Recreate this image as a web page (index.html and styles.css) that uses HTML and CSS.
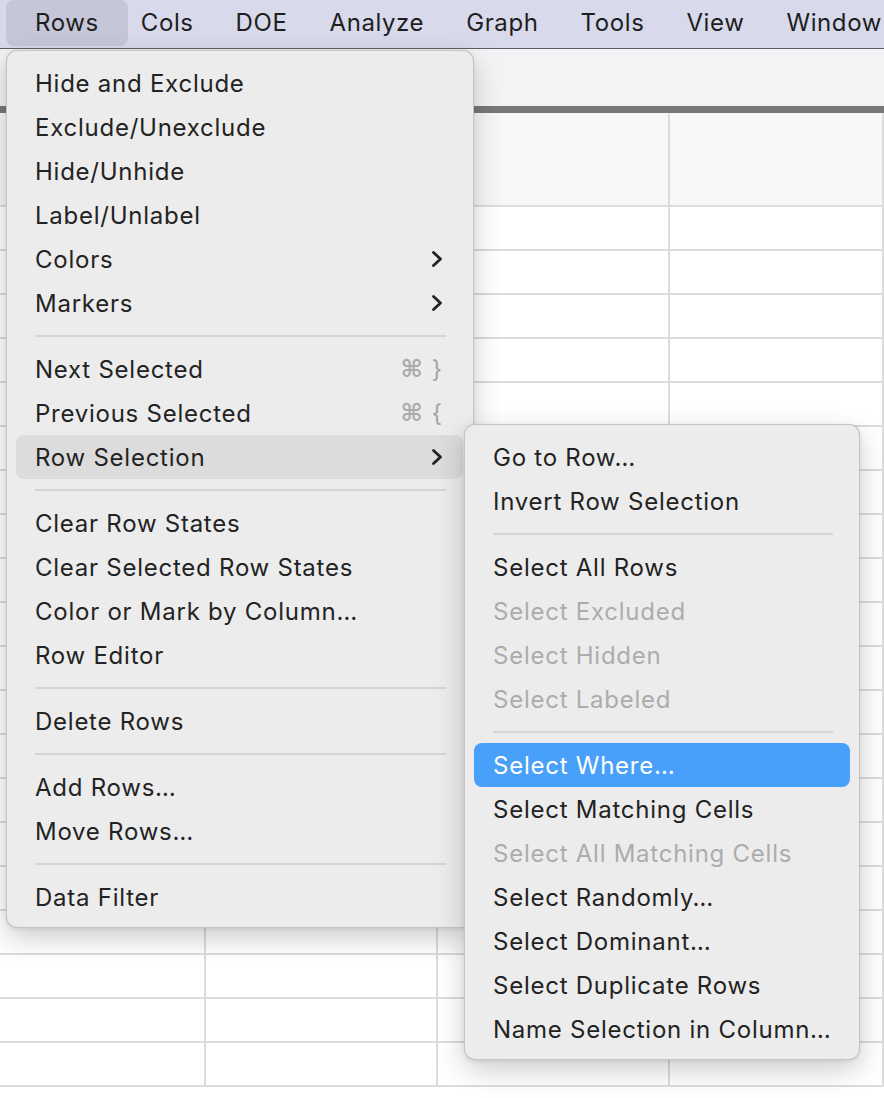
FILE: index.html
```html
<!DOCTYPE html>
<html lang="en">
<head>
<meta charset="utf-8">
<title>Rows menu</title>
<link rel="stylesheet" href="styles.css">
</head>
<body>
<div class="app">
  <nav class="menubar">
    <span class="mb-item active">Rows</span>
    <span class="mb-item">Cols</span>
    <span class="mb-item">DOE</span>
    <span class="mb-item">Analyze</span>
    <span class="mb-item">Graph</span>
    <span class="mb-item">Tools</span>
    <span class="mb-item">View</span>
    <span class="mb-item">Window</span>
  </nav>
  <div class="toolbar"></div>
  <div class="divider"></div>
  <div class="sheet">
    <div class="row header"><div class="cell"></div><div class="cell"></div><div class="cell"></div><div class="cell"></div></div>
    <div class="row"><div class="cell"></div><div class="cell"></div><div class="cell"></div><div class="cell"></div></div>
    <div class="row"><div class="cell"></div><div class="cell"></div><div class="cell"></div><div class="cell"></div></div>
    <div class="row"><div class="cell"></div><div class="cell"></div><div class="cell"></div><div class="cell"></div></div>
    <div class="row"><div class="cell"></div><div class="cell"></div><div class="cell"></div><div class="cell"></div></div>
    <div class="row"><div class="cell"></div><div class="cell"></div><div class="cell"></div><div class="cell"></div></div>
    <div class="row"><div class="cell"></div><div class="cell"></div><div class="cell"></div><div class="cell"></div></div>
    <div class="row"><div class="cell"></div><div class="cell"></div><div class="cell"></div><div class="cell"></div></div>
    <div class="row"><div class="cell"></div><div class="cell"></div><div class="cell"></div><div class="cell"></div></div>
    <div class="row"><div class="cell"></div><div class="cell"></div><div class="cell"></div><div class="cell"></div></div>
    <div class="row"><div class="cell"></div><div class="cell"></div><div class="cell"></div><div class="cell"></div></div>
    <div class="row"><div class="cell"></div><div class="cell"></div><div class="cell"></div><div class="cell"></div></div>
    <div class="row"><div class="cell"></div><div class="cell"></div><div class="cell"></div><div class="cell"></div></div>
    <div class="row"><div class="cell"></div><div class="cell"></div><div class="cell"></div><div class="cell"></div></div>
    <div class="row"><div class="cell"></div><div class="cell"></div><div class="cell"></div><div class="cell"></div></div>
    <div class="row"><div class="cell"></div><div class="cell"></div><div class="cell"></div><div class="cell"></div></div>
    <div class="row"><div class="cell"></div><div class="cell"></div><div class="cell"></div><div class="cell"></div></div>
    <div class="row"><div class="cell"></div><div class="cell"></div><div class="cell"></div><div class="cell"></div></div>
    <div class="row"><div class="cell"></div><div class="cell"></div><div class="cell"></div><div class="cell"></div></div>
    <div class="row"><div class="cell"></div><div class="cell"></div><div class="cell"></div><div class="cell"></div></div>
    <div class="row"><div class="cell"></div><div class="cell"></div><div class="cell"></div><div class="cell"></div></div>
  </div>

  <div class="menu main">
    <div class="item">Hide and Exclude</div>
    <div class="item">Exclude/Unexclude</div>
    <div class="item">Hide/Unhide</div>
    <div class="item">Label/Unlabel</div>
    <div class="item"><span>Colors</span><svg class="chev" viewBox="0 0 12 18" width="12" height="18"><polyline points="2.5,2.5 9.5,9 2.5,15.5"/></svg></div>
    <div class="item"><span>Markers</span><svg class="chev" viewBox="0 0 12 18" width="12" height="18"><polyline points="2.5,2.5 9.5,9 2.5,15.5"/></svg></div>
    <div class="sep"></div>
    <div class="item"><span>Next Selected</span><span class="key"><span class="cmd">⌘</span><span>}</span></span></div>
    <div class="item"><span>Previous Selected</span><span class="key"><span class="cmd">⌘</span><span>{</span></span></div>
    <div class="item hover"><span>Row Selection</span><svg class="chev" viewBox="0 0 12 18" width="12" height="18"><polyline points="2.5,2.5 9.5,9 2.5,15.5"/></svg></div>
    <div class="sep"></div>
    <div class="item">Clear Row States</div>
    <div class="item">Clear Selected Row States</div>
    <div class="item">Color or Mark by Column…</div>
    <div class="item">Row Editor</div>
    <div class="sep"></div>
    <div class="item">Delete Rows</div>
    <div class="sep"></div>
    <div class="item">Add Rows…</div>
    <div class="item">Move Rows…</div>
    <div class="sep"></div>
    <div class="item">Data Filter</div>
  </div>

  <div class="menu sub">
    <div class="item">Go to Row…</div>
    <div class="item">Invert Row Selection</div>
    <div class="sep"></div>
    <div class="item">Select All Rows</div>
    <div class="item disabled">Select Excluded</div>
    <div class="item disabled">Select Hidden</div>
    <div class="item disabled">Select Labeled</div>
    <div class="sep"></div>
    <div class="item active">Select Where…</div>
    <div class="item">Select Matching Cells</div>
    <div class="item disabled">Select All Matching Cells</div>
    <div class="item">Select Randomly…</div>
    <div class="item">Select Dominant…</div>
    <div class="item">Select Duplicate Rows</div>
    <div class="item">Name Selection in Column…</div>
  </div>
</div>
</body>
</html>
```

FILE: styles.css
```css
html, body {
  margin: 0;
  padding: 0;
}

body {
  width: 884px;
  height: 1098px;
  overflow: hidden;
  background: #ffffff;
  font-family: Inter, "DejaVu Sans", sans-serif;
  -webkit-font-smoothing: antialiased;
}

.app {
  position: relative;
  height: 1098px;
  overflow: hidden;
}

/* Menu bar */
.menubar {
  height: 48px;
  box-sizing: content-box;
  background: #d8d9ea;
  border-bottom: 1px solid #5e5e62;
  display: flex;
  align-items: flex-start;
  gap: 42px;
  padding-left: 35px;
  font-size: 24px;
  letter-spacing: 0.6px;
  color: #1e1e1e;
  white-space: nowrap;
}

.mb-item {
  height: 46px;
  line-height: 46px;
}

.mb-item.active {
  background: #c5c7d9;
  border-radius: 8px;
  padding: 0 29px;
  margin: 0 -29px;
}

.toolbar {
  height: 57px;
  background: #f2f3f5;
}

.divider {
  height: 7px;
  background: #787878;
}

/* Data grid */
.row {
  display: grid;
  grid-template-columns: 206px 232px 232px 1fr;
  height: 44px;
}

.row.header {
  height: 94px;
  background: #f7f7f7;
}

.cell {
  box-sizing: border-box;
  border-right: 2px solid #dcdcdc;
  border-bottom: 2px solid #dcdcdc;
}

/* Menus */
.menu {
  position: absolute;
  box-sizing: border-box;
  background: #ececed;
  border: 1px solid rgba(0, 0, 0, 0.17);
  border-radius: 11px;
  box-shadow: 0 10px 28px rgba(0, 0, 0, 0.2), 0 1px 4px rgba(0, 0, 0, 0.08);
  padding: 10px 10px 8px 9px;
  font-size: 24px;
  letter-spacing: 0.75px;
  color: #232323;
  white-space: nowrap;
}

.menu.main {
  left: 6px;
  top: 50px;
  width: 468px;
  height: 878px;
}

.menu.sub {
  left: 464px;
  top: 424px;
  width: 396px;
  height: 636px;
  padding-right: 9px;
}

.item {
  height: 44px;
  display: flex;
  align-items: center;
  justify-content: space-between;
  padding: 0 20px 0 19px;
  border-radius: 8px;
}

.item.hover {
  background: #dcdcdd;
}

.item.active {
  background: #48a0fa;
  color: #ffffff;
}

.item.disabled {
  color: #acacac;
}

.sep {
  height: 2px;
  background: #d6d6d7;
  margin: 10px 17px 10px 19px;
}

.chev {
  fill: none;
  stroke: #222222;
  stroke-width: 2.8;
  stroke-linecap: round;
  stroke-linejoin: round;
}

.key {
  color: #a3a3a3;
  display: flex;
  align-items: center;
  gap: 9px;
  padding-right: 1px;
  letter-spacing: 0;
}

.cmd {
  font-family: "DejaVu Sans", sans-serif;
  font-size: 24px;
  font-weight: bold;
  color: #ababab;
}
```
